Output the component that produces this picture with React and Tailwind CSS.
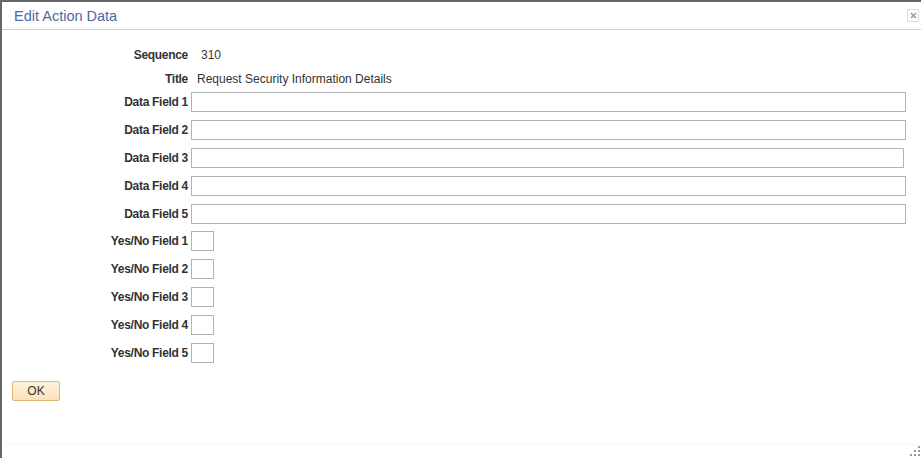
import React from 'react'

const font = { fontFamily: '"Liberation Sans", Arial, sans-serif' }

function Label({ children }) {
  return (
    <div className="w-[189px] shrink-0 pr-[3px] text-right text-[12px] font-bold tracking-[-0.3px] text-[#333]">
      {children}
    </div>
  )
}

function TextRow({ label, width = 'w-[715px]' }) {
  return (
    <div className="flex h-[28px] items-center">
      <Label>{label}</Label>
      <div className={`h-[20px] ${width} border border-[#b3b3b3] bg-white`} />
    </div>
  )
}

function CheckRow({ label }) {
  return (
    <div className="flex h-[28px] items-center">
      <Label>{label}</Label>
      <div className="h-[20px] w-[23px] border border-[#b3b3b3] bg-white" />
    </div>
  )
}

export default function App() {
  return (
    <div style={font} className="flex h-[458px] w-[921px] flex-col border-l-2 border-t-2 border-[#666] bg-white">
      {/* Header */}
      <div className="flex h-[28px] shrink-0 items-center justify-between border-b border-[#cfcfcf] pl-[12px] pr-[2px]">
        <span className="pt-[2px] text-[14.5px] text-[#4a6ba5]">Edit Action Data</span>
        <div className="mb-[1px] flex h-[13px] w-[12px] items-center justify-center border border-[#dcdcdc]">
          <svg width="7" height="7" viewBox="0 0 7 7">
            <path d="M1 1 L6 6 M6 1 L1 6" stroke="#8fa1ad" strokeWidth="1.6" />
          </svg>
        </div>
      </div>

      {/* Body */}
      <div className="flex flex-1 flex-col pt-[13px]">
        <div className="flex h-[23px] items-center">
          <Label>Sequence</Label>
          <span className="pl-[10px] text-[12px] text-[#333]">310</span>
        </div>
        <div className="flex h-[22px] items-center pt-[3px]">
          <Label>Title</Label>
          <span className="pl-[6px] text-[12px] text-[#333]">Request Security Information Details</span>
        </div>
        <TextRow label="Data Field 1" />
        <TextRow label="Data Field 2" />
        <TextRow label="Data Field 3" width="w-[713px]" />
        <TextRow label="Data Field 4" />
        <TextRow label="Data Field 5" />
        <div className="-mt-[1px]" />
        <CheckRow label="Yes/No Field 1" />
        <CheckRow label="Yes/No Field 2" />
        <CheckRow label="Yes/No Field 3" />
        <CheckRow label="Yes/No Field 4" />
        <CheckRow label="Yes/No Field 5" />

        <div className="mt-[11px] pl-[10px]">
          <button className="h-[20px] w-[48px] rounded-[2px] border border-[#e3b473] bg-gradient-to-b from-[#fff3e0] to-[#fbe1b8] text-[12px] text-[#333]">
            OK
          </button>
        </div>
      </div>

      {/* Footer with resize grip */}
      <div className="flex h-[14px] shrink-0 items-end justify-end border-t border-[#f8f8f8] pb-[2px] pr-[1px]">
        <svg width="10" height="10" viewBox="0 0 10 10">
          <rect x="8" y="0" width="2" height="2" fill="#a39495" />
          <rect x="4" y="4" width="2" height="2" fill="#a39495" />
          <rect x="8" y="4" width="2" height="2" fill="#a39495" />
          <rect x="0" y="8" width="2" height="2" fill="#a39495" />
          <rect x="4" y="8" width="2" height="2" fill="#a39495" />
          <rect x="8" y="8" width="2" height="2" fill="#a39495" />
        </svg>
      </div>
    </div>
  )
}
